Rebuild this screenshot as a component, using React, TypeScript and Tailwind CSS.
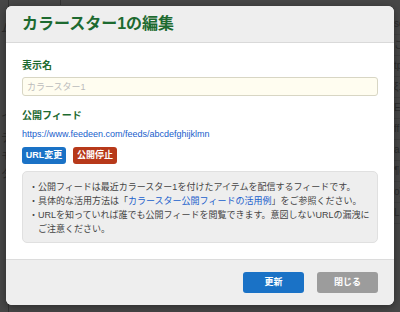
import React from 'react';

const font = { fontFamily: '"Liberation Sans", "Noto Sans CJK JP", sans-serif' };

function Backdrop() {
  const left = [
    { y: 'mt-[22px]', t: 'ム' },
    { y: 'mt-[76px]', t: 'イ' },
    { y: 'mt-[10px]', t: 'テ' },
    { y: 'mt-[6px]', t: 'モ' },
    { y: 'mt-[6px]', t: 'タ' },
  ];
  const right = ['se', 'こ', 'tp', 'ξ1', 'E', 'ff', 'a (', '¶(', 'o)', 'L'];
  return (
    <div className="flex h-full justify-between text-[11px] text-[#2c2c2c]">
      <div className="flex w-[8px] flex-col overflow-hidden pl-[1px] leading-[12px]">
        {left.map((l, i) => (
          <span key={i} className={l.y}>{l.t}</span>
        ))}
      </div>
      <div className="flex h-full">
        <div className="mr-[51px] w-px bg-[#333]" />
        <div className="h-[5px] w-px bg-[#333]" />
      </div>
      <div className="flex-1" />
      <div className="flex w-[6px] flex-col overflow-hidden pt-[14px] text-[10px] leading-[20px]">
        {right.map((r, i) => (
          <span key={i} className="whitespace-nowrap border-b border-[#404040]">{r}</span>
        ))}
      </div>
    </div>
  );
}

export default function App() {
  return (
    <div className="relative h-[312px] w-[400px] overflow-hidden bg-[#474747]" style={font}>
      <Backdrop />

      <div className="absolute left-[6px] top-[6px] flex h-[299px] w-[388px] flex-col overflow-hidden rounded-[6px] bg-white shadow-[0_2px_8px_rgba(0,0,0,0.4)]">
        <div className="flex h-[37px] shrink-0 items-center border-b border-[#d9d9d9] bg-[#eeeeee] px-4">
          <h1 className="text-[16px] font-bold text-[#1d6a30]">カラースター1の編集</h1>
        </div>

        <div className="flex h-[216px] shrink-0 flex-col px-4 pt-[16px]">
          <label className="text-[10px] font-bold leading-[14px] text-[#1d6a30]">表示名</label>
          <input
            className="mt-[4px] h-[19px] w-full rounded-[3px] border border-[#d8d6c4] bg-[#fffdf0] px-[4px] text-[9px] text-[#333] placeholder:text-[#bbbbbb] outline-none"
            placeholder="カラースター1"
          />

          <div className="mt-[13px] text-[10px] font-bold leading-[14px] text-[#1d6a30]">公開フィード</div>
          <a className="mt-[4px] text-[9px] leading-[14px] text-[#2060cc]">
            https://www.feedeen.com/feeds/abcdefghijklmn
          </a>

          <div className="mt-[6px] flex gap-[7px]">
            <button className="h-[17px] w-[44px] rounded-[3px] bg-[#1a72c6] text-[9px] font-bold text-white">
              URL変更
            </button>
            <button className="h-[17px] w-[44px] rounded-[3px] bg-[#b7391a] text-[9px] font-bold text-white">
              公開停止
            </button>
          </div>

          <div className="mt-[7px] h-[72px] rounded-[5px] border border-[#e0e0e0] bg-[#eeeeee] px-[6px] pt-[8px] text-[9px] leading-[14px] text-[#444]">
            <div className="flex">
              <span className="w-[9px] shrink-0">・</span>
              <span>公開フィードは最近カラースター1を付けたアイテムを配信するフィードです。</span>
            </div>
            <div className="flex">
              <span className="w-[9px] shrink-0">・</span>
              <span>
                具体的な活用方法は「<span className="text-[#2060cc]">カラースター公開フィードの活用例</span>」をご参照ください。
              </span>
            </div>
            <div className="flex">
              <span className="w-[9px] shrink-0">・</span>
              <span>URLを知っていれば誰でも公開フィードを閲覧できます。意図しないURLの漏洩にご注意ください。</span>
            </div>
          </div>
        </div>

        <div className="flex flex-1 items-center justify-end gap-[13px] border-t border-[#dcdcdc] bg-[#eeeeee] px-4">
          <button className="h-[21px] w-[61px] rounded-[3px] bg-[#1a72c6] text-[9px] font-bold text-white">
            更新
          </button>
          <button className="h-[21px] w-[61px] rounded-[3px] bg-[#9c9c9c] text-[9px] font-bold text-white">
            閉じる
          </button>
        </div>
      </div>
    </div>
  );
}
